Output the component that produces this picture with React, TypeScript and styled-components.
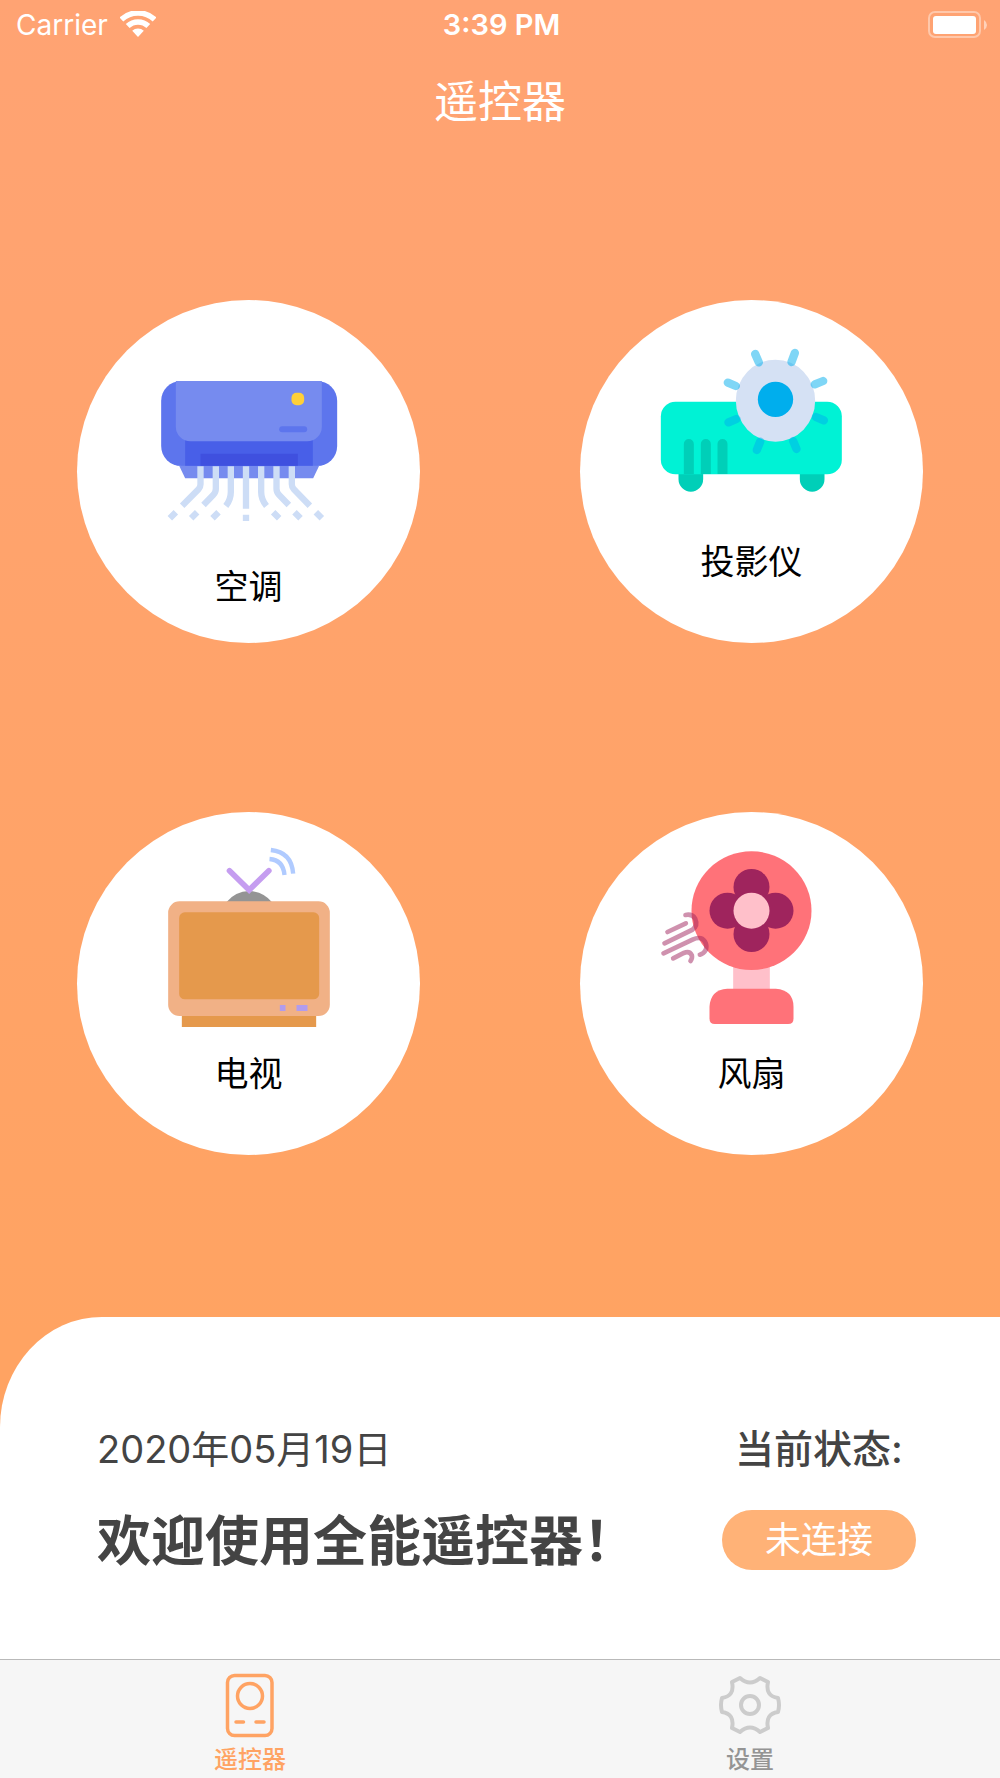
import React from "react";
import styled, { createGlobalStyle } from "styled-components";

const GlobalStyle = createGlobalStyle`
  *, *::before, *::after { box-sizing: border-box; }
  body { margin: 0; }
  button { font: inherit; border: 0; padding: 0; cursor: pointer; }
  h1, h2, p { margin: 0; }
`;

const Page = styled.div`
  min-height: 100vh;
  display: flex;
  flex-direction: column;
  background: linear-gradient(#ffa373, #ffa362 75%);
  font-family: Inter, "Noto Sans CJK SC", sans-serif;
`;

const StatusBar = styled.div`
  display: grid;
  grid-template-columns: 1fr auto 1fr;
  align-items: center;
  height: 50px;
  padding: 0 13px 0 16px;
  color: #fff;
  font-size: 28px;
  line-height: 36px;
`;

const Carrier = styled.div`
  display: flex;
  align-items: center;
  gap: 12px;
`;

const Clock = styled.time`
  font-size: 29px;
  font-weight: 600;
`;

const Battery = styled.svg`
  justify-self: end;
`;

const Title = styled.h1`
  padding: 20px 0;
  text-align: center;
  color: #fff;
  font-size: 44px;
  font-weight: 400;
  line-height: 64px;
`;

const Devices = styled.main`
  flex: 1;
  display: grid;
  grid-template-columns: repeat(2, minmax(0, 343px));
  justify-content: space-between;
  align-content: start;
  row-gap: 169px;
  padding: 146px 77px 156px;
`;

const Device = styled.button<{ $top: number }>`
  aspect-ratio: 1;
  border-radius: 50%;
  background: #fff;
  color: #000;
  display: flex;
  flex-direction: column;
  align-items: center;
  gap: 14px;
  padding-top: ${(p) => p.$top}px;
  font-size: 34px;
  line-height: 40px;
`;

const Picture = styled.svg`
  display: block;
  width: 220px;
  height: 200px;
  flex: none;
`;

const Panel = styled.section`
  display: flex;
  justify-content: space-between;
  background: #fff;
  border-top-left-radius: 102px 110px;
  padding: 104px 84px 85px 97px;
  color: #444;
`;

const Column = styled.div<{ $center?: boolean }>`
  display: flex;
  flex-direction: column;
  gap: 33px;
  align-items: ${(p) => (p.$center ? "center" : "flex-start")};
`;

const Line = styled.p<{ $strong?: boolean }>`
  font-size: ${(p) => (p.$strong ? 39 : 38)}px;
  line-height: 56px;
  font-weight: ${(p) => (p.$strong ? 500 : 400)};
`;

const Welcome = styled.h2`
  font-size: 54px;
  line-height: 64px;
  font-weight: 700;
`;

const Connect = styled.button`
  width: 194px;
  height: 60px;
  border-radius: 30px;
  background: #ffb277;
  color: #fff;
  font-size: 36px;
  line-height: 60px;
`;

const TabBar = styled.nav`
  display: grid;
  grid-template-columns: 1fr 1fr;
  background: #f6f6f6;
  border-top: 1px solid #b9b9b9;
`;

const Tab = styled.a<{ $active?: boolean }>`
  display: flex;
  flex-direction: column;
  align-items: center;
  padding: 11px 0 4px;
  gap: 7px;
  color: ${(p) => (p.$active ? "#ffa363" : "#949494")};
  font-size: 24px;
  font-weight: 500;
  line-height: 28px;
  text-decoration: none;
`;

const AirConditioner = () => (
  <Picture viewBox="-2.5 -22 660 600" aria-hidden="true">
    <rect x="64" y="62" width="528" height="255" rx="60" fill="#5d75ed" />
    <path d="M118 316H538L520 354H136Z" fill="#768bef" />
    <path d="M136 230H519V316H136Z" fill="#485fe8" />
    <path d="M182 280H474V316H182Z" fill="#3f50df" />
    <path d="M108 62H546V199A44 44 0 0 1 502 243H152A44 44 0 0 1 108 199Z" fill="#768bef" />
    <rect x="455" y="97" width="38" height="38" rx="15" fill="#ffd039" />
    <rect x="418" y="198" width="84" height="18" rx="9" fill="#5d75ed" />
    <g fill="none" stroke="#cdddf6" strokeWidth="19">
      <path d="M182 318V372Q182 381 176 387L127 436" />
      <path d="M228 318V385Q228 396 220 404L191 434" />
      <path d="M273 318V395Q273 418 258 437" />
      <path d="M318.500 318V445M318.500 463V482" />
      <path d="M364 318V395Q364 418 380 437" />
      <path d="M410 318V385Q410 396 418 404L447 434" />
      <path d="M456 318V372Q456 381 462 387L510 436" />
      <path d="M108 456L90 474M172 456L154 474M236 456L218 474M400 456L418 474M464 456L482 474M528 456L546 474" />
    </g>
  </Picture>
);

const Projector = () => (
  <Picture viewBox="6.5 -6 660 600" aria-hidden="true">
    <path d="M116 425H190V448A37 37 0 0 1 116 448ZM480 425H554V448A37 37 0 0 1 480 448Z" fill="#00cfb8" />
    <rect x="63" y="215" width="543" height="218" rx="44" fill="#00f2d5" />
    <path d="M132 432V342A15 15 0 0 1 162 342V432ZM183 432V342A15 15 0 0 1 213 342V432ZM233 432V342A15 15 0 0 1 263 342V432Z" fill="#00cfb8" />
    <ellipse cx="407" cy="212" rx="119" ry="123" fill="#d5e1f4" />
    <circle cx="407" cy="208" r="53" fill="#00aeed" />
    <g stroke="#00aeed" strokeOpacity=".5" strokeWidth="25" strokeLinecap="round">
      <path d="M346 72L357 97M465 69L455 96M264 158L288 168M550 153L525 163M266 277L290 267M552 271L528 261M351 360L361 335M470 357L460 333" />
    </g>
  </Picture>
);

const Television = () => (
  <Picture viewBox="-2.5 30 660 600" aria-hidden="true">
    <path d="M260 216Q287 184 328 183Q369 184 396 216Z" fill="#949494" />
    <path d="M269 122L328 180L387 122" fill="none" stroke="#c59df0" strokeWidth="17" strokeLinecap="round" />
    <path d="M126 550H529V591H126Z" fill="#e5994c" />
    <rect x="85" y="214" width="485" height="344" rx="34" fill="#f1b186" />
    <rect x="118" y="247" width="420" height="261" rx="17" fill="#e5994c" />
    <path d="M420 525H437V543H420ZM470 525H503V543H470Z" fill="#b19ced" />
    <path d="M389 87Q430 90 434 135M393 60Q455 66 460 131" fill="none" stroke="#b0cbff" strokeWidth="13" />
  </Picture>
);

const Fan = () => (
  <Picture viewBox="6.5 30 660 600" aria-hidden="true">
    <path d="M280 400H390V490H280Z" fill="#ffc0ca" />
    <ellipse cx="335" cy="242" rx="180" ry="178" fill="#ff7279" />
    <path d="M262 476H408Q461 480 461 530V566Q461 582 445 582H225Q209 582 209 566V530Q212 479 262 476Z" fill="#ff7279" />
    <g fill="#9f245d">
      <circle cx="335" cy="171" r="54" />
      <circle cx="335" cy="312" r="54" />
      <circle cx="263" cy="242" r="54" />
      <circle cx="407" cy="242" r="54" />
    </g>
    <circle cx="335" cy="242" r="54" fill="#ffc0ca" />
    <g fill="none" stroke="#9f245d" strokeOpacity=".5" strokeWidth="14" strokeLinecap="round">
      <path d="M83 306L138 280" />
      <path d="M137 255Q157 251 166 266Q175 287 158 299L74 340" />
      <path d="M71 370L158 329Q187 315 198 340C203 356 196 369 180 374" />
      <path d="M100 385L132 369Q149 362 156 376Q158 385 152 393" />
    </g>
  </Picture>
);

const devices = [
  { name: "空调", top: 53, Icon: AirConditioner },
  { name: "投影仪", top: 28, Icon: Projector },
  { name: "电视", top: 28, Icon: Television },
  { name: "风扇", top: 28, Icon: Fan },
];

export default function App() {
  return (
    <Page>
      <GlobalStyle />
      <StatusBar>
        <Carrier>
          Carrier
          <svg width="36" height="28" viewBox="0 0 36 28" fill="none" stroke="#fff" strokeWidth="5.5" aria-label="Wi-Fi">
            <path d="M1.400 8.500A24.200 24.200 0 0 1 34.600 8.500" />
            <path d="M7.700 15.100A15 15 0 0 1 28.300 15.100" />
            <path d="M12.200 19.800A8.500 8.500 0 0 1 23.800 19.800L18 26Z" fill="#fff" stroke="none" />
          </svg>
        </Carrier>
        <Clock>3:39 PM</Clock>
        <Battery width="59" height="28" viewBox="0 0 59 28" aria-label="Battery">
          <rect x="1" y="1" width="51" height="25" rx="6" fill="none" stroke="#fff" strokeOpacity=".4" strokeWidth="2" />
          <rect x="5" y="5" width="43" height="18" rx="3" fill="#fff" />
          <path d="M56 9Q59 11 59 14T56 19Z" fill="#fff" fillOpacity=".5" />
        </Battery>
      </StatusBar>
      <Title>遥控器</Title>
      <Devices>
        {devices.map(({ name, top, Icon }) => (
          <Device key={name} type="button" $top={top}>
            <Icon />
            <span>{name}</span>
          </Device>
        ))}
      </Devices>
      <Panel>
        <Column>
          <Line>2020年05月19日</Line>
          <Welcome>欢迎使用全能遥控器！</Welcome>
        </Column>
        <Column $center>
          <Line $strong>当前状态:</Line>
          <Connect type="button">未连接</Connect>
        </Column>
      </Panel>
      <TabBar>
        <Tab href="#remote" $active>
          <svg width="64" height="68" viewBox="0 0 64 68" fill="none" stroke="currentColor" strokeWidth="3.5" strokeLinecap="round" aria-hidden="true">
            <rect x="9.500" y="4.500" width="44.500" height="60" rx="7" />
            <circle cx="32" cy="25" r="12.500" />
            <path d="M18 51H25.500M38 51H46" />
          </svg>
          遥控器
        </Tab>
        <Tab href="#settings">
          <svg width="64" height="68" viewBox="0 0 64 68" fill="none" stroke="#ccc" strokeWidth="4" strokeLinejoin="round" aria-hidden="true">
            <circle cx="32" cy="34" r="9" />
            <path d="M22 7L14 11Q17 25 4 27Q2 34 4 41Q17 43 14 57L22 61Q32 52 42 61L50 57Q47 43 60 41Q62 34 60 27Q47 25 50 11L42 7Q32 16 22 7Z" />
          </svg>
          设置
        </Tab>
      </TabBar>
    </Page>
  );
}
